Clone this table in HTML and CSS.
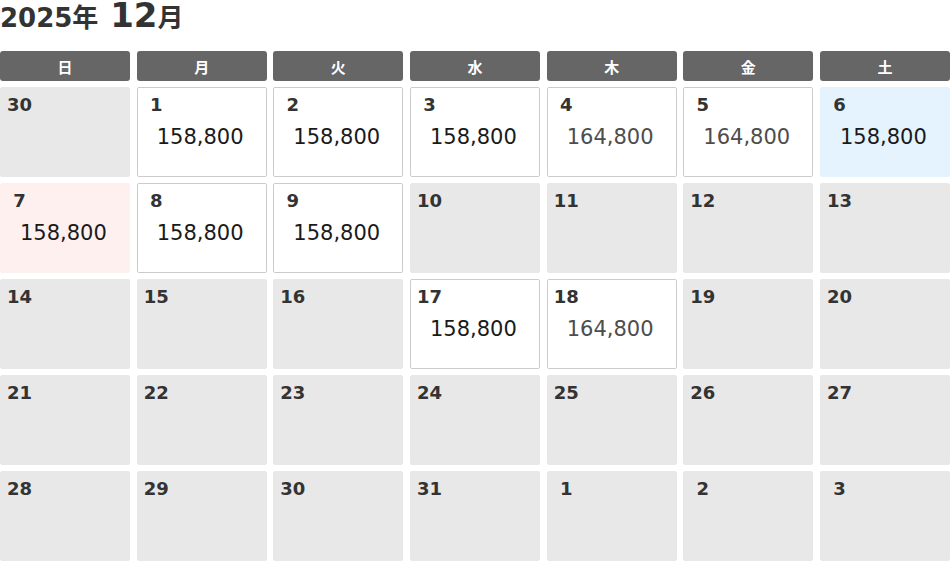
FILE: index.html
```html
<!DOCTYPE html>
<html lang="ja">
<head>
<meta charset="utf-8">
<title>2025年 12月</title>
<link rel="stylesheet" href="styles.css">
</head>
<body>
<div class="cal">
  <h1 class="title"><span class="ym">2025年</span><span class="ym ym-big">&nbsp;12</span><span class="ym">月</span></h1>
  <div class="grid">
    <div class="wd">日</div><div class="wd">月</div><div class="wd">火</div><div class="wd">水</div><div class="wd">木</div><div class="wd">金</div><div class="wd">土</div>

    <div class="cell off"><div class="d">30</div></div>
    <div class="cell on"><div class="d">&nbsp;1</div><div class="p">158,800</div></div>
    <div class="cell on"><div class="d">&nbsp;2</div><div class="p">158,800</div></div>
    <div class="cell on"><div class="d">&nbsp;3</div><div class="p">158,800</div></div>
    <div class="cell on"><div class="d">&nbsp;4</div><div class="p hi">164,800</div></div>
    <div class="cell on"><div class="d">&nbsp;5</div><div class="p hi">164,800</div></div>
    <div class="cell sat"><div class="d">&nbsp;6</div><div class="p">158,800</div></div>

    <div class="cell sun"><div class="d">&nbsp;7</div><div class="p">158,800</div></div>
    <div class="cell on"><div class="d">&nbsp;8</div><div class="p">158,800</div></div>
    <div class="cell on"><div class="d">&nbsp;9</div><div class="p">158,800</div></div>
    <div class="cell off"><div class="d">10</div></div>
    <div class="cell off"><div class="d">11</div></div>
    <div class="cell off"><div class="d">12</div></div>
    <div class="cell off"><div class="d">13</div></div>

    <div class="cell off"><div class="d">14</div></div>
    <div class="cell off"><div class="d">15</div></div>
    <div class="cell off"><div class="d">16</div></div>
    <div class="cell on"><div class="d">17</div><div class="p">158,800</div></div>
    <div class="cell on"><div class="d">18</div><div class="p hi">164,800</div></div>
    <div class="cell off"><div class="d">19</div></div>
    <div class="cell off"><div class="d">20</div></div>

    <div class="cell off"><div class="d">21</div></div>
    <div class="cell off"><div class="d">22</div></div>
    <div class="cell off"><div class="d">23</div></div>
    <div class="cell off"><div class="d">24</div></div>
    <div class="cell off"><div class="d">25</div></div>
    <div class="cell off"><div class="d">26</div></div>
    <div class="cell off"><div class="d">27</div></div>

    <div class="cell off"><div class="d">28</div></div>
    <div class="cell off"><div class="d">29</div></div>
    <div class="cell off"><div class="d">30</div></div>
    <div class="cell off"><div class="d">31</div></div>
    <div class="cell off"><div class="d">&nbsp;1</div></div>
    <div class="cell off"><div class="d">&nbsp;2</div></div>
    <div class="cell off"><div class="d">&nbsp;3</div></div>
  </div>
</div>
</body>
</html>
```

FILE: styles.css
```css
html, body {
  margin: 0;
  padding: 0;
  background: #fff;
}
body {
  font-family: "DejaVu Sans", "Noto Sans CJK JP", sans-serif;
  color: #333;
}
.cal {
  width: 950px;
}
.title {
  margin: 0;
  height: 51px;
  font-size: 26px;
  line-height: 30px;
  font-weight: bold;
  color: #333;
  white-space: nowrap;
}
.ym {
  font-size: 26px;
  line-height: 30px;
}
.ym-big {
  font-size: 34px;
}
.grid {
  display: grid;
  grid-template-columns: repeat(7, 1fr);
  grid-template-rows: 30px repeat(5, 90px);
  column-gap: calc(40px / 6);
  row-gap: 6px;
}
.wd {
  background: #666;
  color: #fff;
  border-radius: 3px;
  font-weight: bold;
  font-size: 15px;
  display: flex;
  align-items: center;
  justify-content: center;
}
.cell {
  box-sizing: border-box;
  border: 1px solid transparent;
  border-radius: 2px;
  padding: 6px 6px 0;
}
.off {
  background: #e8e8e8;
  border-color: #e8e8e8;
}
.on {
  background: #fff;
  border-color: #cccccc;
}
.sat {
  background: #e5f3fe;
  border-color: #e5f3fe;
}
.sun {
  background: #fff0f0;
  border-color: #fff0f0;
}
.d {
  font-size: 18px;
  line-height: 21px;
  font-weight: bold;
  color: #333;
  white-space: pre;
}
.p {
  margin: 10px 0 0 13px;
  font-size: 21px;
  line-height: 25px;
  color: #1a1a1a;
}
.p.hi {
  color: #4d4d4d;
}
```
